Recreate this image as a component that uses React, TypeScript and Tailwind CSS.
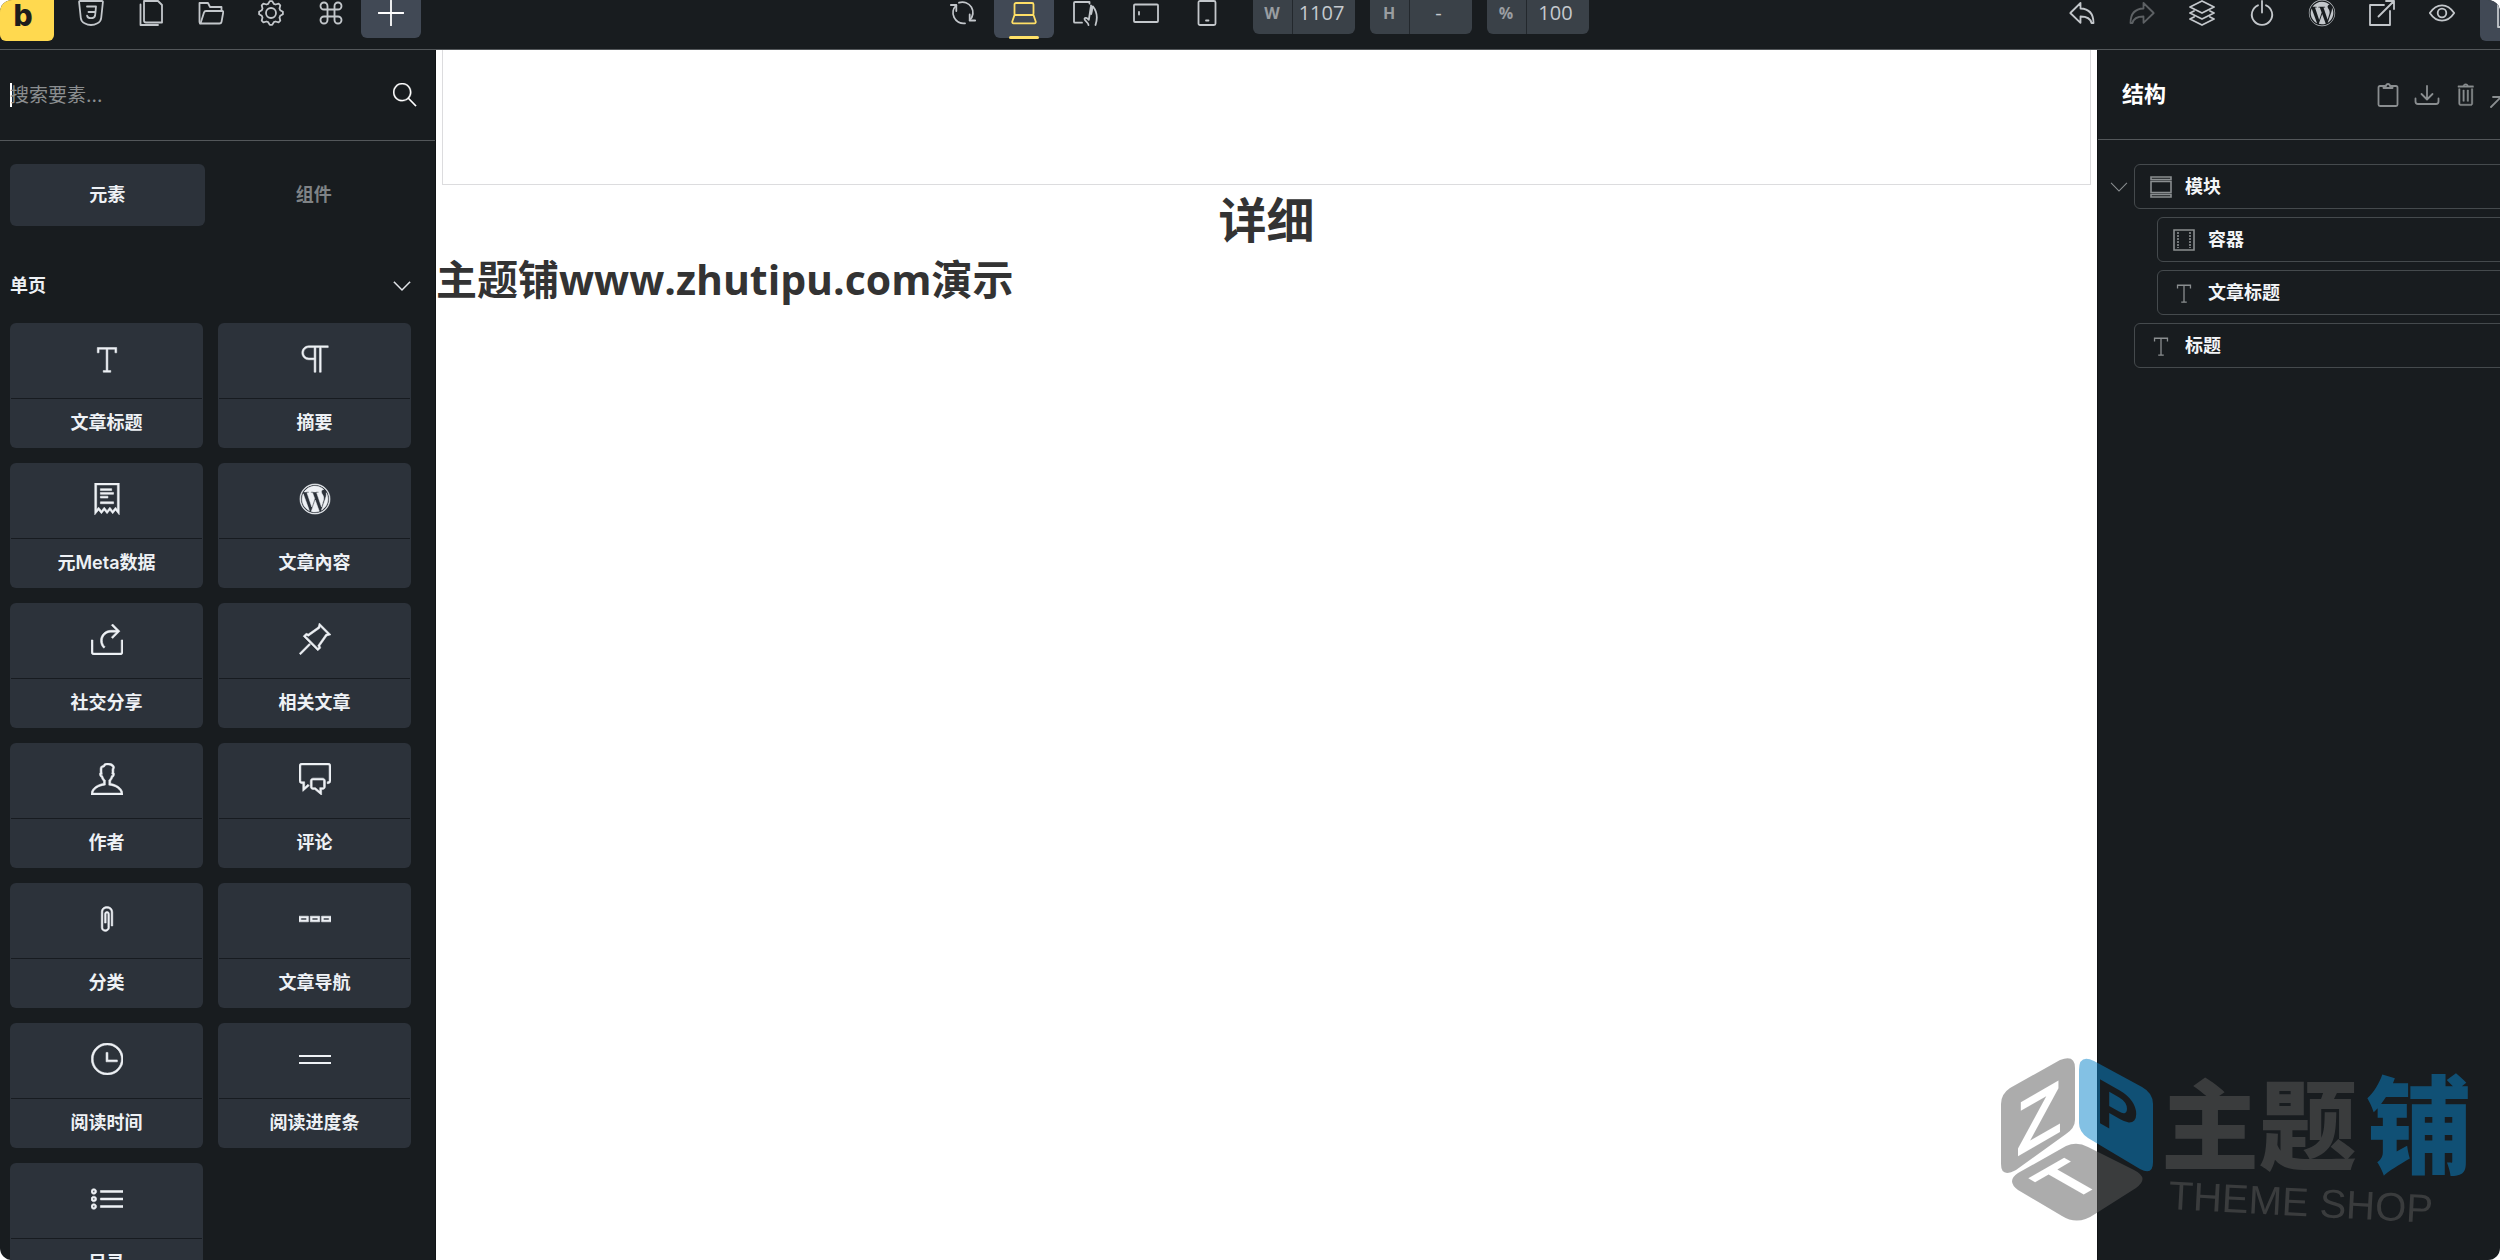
import type { ReactNode } from 'react';
import { Command } from 'lucide-react';
import {
  TfiAngleDown,
  TfiClip,
  TfiComments,
  TfiLayoutMenuSeparated,
  TfiList,
  TfiParagraph,
  TfiPinAlt,
  TfiReceipt,
  TfiSearch,
  TfiShare,
  TfiText,
  TfiTime,
  TfiTrash,
  TfiUser,
  TfiWordpress,
} from 'react-icons/tfi';

/* 26px outline icon used in both toolbars */
const Line = ({ children }: { children: ReactNode }) => (
  <svg
    className="h-[26px] w-[26px] shrink-0"
    viewBox="0 0 26 26"
    fill="none"
    stroke="currentColor"
    strokeWidth={1.8}
    strokeLinejoin="round"
    strokeLinecap="round"
  >
    {children}
  </svg>
);

/* Cog outline with eight rounded teeth */
const gearPath = Array.from({ length: 32 }, (_, i) => {
  const r = i % 4 < 2 ? 12 : 9.6;
  const a = ((i + 0.5) / 32) * Math.PI * 2 - Math.PI / 2 - Math.PI / 16;
  return `${i ? 'L' : 'M'}${(13 + r * Math.cos(a)).toFixed(1)} ${(13 + r * Math.sin(a)).toFixed(1)}`;
}).join('') + 'Z';

const leftTools = [
  {
    label: 'CSS',
    icon: (
      <Line>
        <path d="M2 1h22q1 0 .9 1l-1.7 16c-.3 2.7-1.5 4.2-3.7 5.2-4.3 2.4-8.7 2.4-13 0-2.2-1-3.4-2.5-3.7-5.2L1.1 2Q1 1 2 1z" />
        <path d="M9 6.5h9l-.5 5.5h-7M17.5 12l-.4 3.5c-.3 1.7-1.9 2.7-4.1 2.7s-3.5-.8-3.9-2.5" />
      </Line>
    ),
  },
  {
    label: '页面',
    icon: (
      <Line>
        <path d="M6 1h14l4 4v17.5H8q-2 0-2-2z" />
        <path d="M2.5 4.5V25H20" />
      </Line>
    ),
  },
  {
    label: '模板',
    icon: (
      <Line>
        <path d="M2 23.5L1.5 22V3H10l2 4h11.5v4" />
        <path d="M8 11h16q1.5 0 1.2 1.5L23.5 22q-.3 1.5-2 1.5h-19L6 12.5Q6.5 11 8 11z" />
      </Line>
    ),
  },
  {
    label: '设置',
    icon: (
      <Line>
        <path d={gearPath} />
        <circle cx="13" cy="13" r="5" />
      </Line>
    ),
  },
  { label: '命令', icon: <Command size={28} strokeWidth={1.6} /> },
];

const devices = [
  {
    label: '刷新',
    icon: (
      <Line>
        <path d="M6.3 5.3A10.5 10.5 0 0 0 15 23.3" />
        <path d="M9 2.7A10.5 10.5 0 0 1 19.7 20.2" />
        <path d="M.8 5h5.5v6M25.2 20.5h-5.5v-6" />
      </Line>
    ),
  },
  {
    label: '桌面',
    active: true,
    icon: (
      <Line>
        <rect x="3.5" y="3" width="19" height="12" rx="1.5" />
        <path d="M3.5 15h19l2.2 6.5q.3 1.8-1.2 1.8h-21q-1.5 0-1.2-1.8z" />
      </Line>
    ),
  },
  {
    label: '平板竖屏',
    icon: (
      <Line>
        <path d="M10 22.7H3q-1 0-1-1V3q0-1 1-1h14.5v1.5" />
        <path d="M16.5 25c0-2.5-3.8-4-4-6 .3-2 2.5-1.3 4.3.8l2-12.8M19 5.5c1.7 1 1.5 4 .2 8.5M21 6.5c3.5 4.5 5 11 2.5 18.5" />
      </Line>
    ),
  },
  {
    label: '手机横屏',
    icon: (
      <Line>
        <rect x="1" y="4.5" width="24" height="17.5" rx="1" />
        <path d="M6 12v2.5" />
      </Line>
    ),
  },
  {
    label: '手机竖屏',
    icon: (
      <Line>
        <rect x="4.5" y="1" width="17" height="24" rx="1.5" />
        <path d="M12 20.5h2.5" />
      </Line>
    ),
  },
];

const sizes = [
  { id: 'width', label: 'W', value: '1107' },
  { id: 'height', label: 'H', value: '-' },
  { id: 'scale', label: '%', value: '100' },
];

const rightTools = [
  {
    label: '撤销',
    icon: (
      <Line>
        <path d="M1.3 13L11.5 3v5.5c8 .3 13 4.5 13 14.5h-2c-1-4.5-4-6.5-11-6.5v6.3z" />
      </Line>
    ),
  },
  {
    label: '重做',
    muted: true,
    icon: (
      <Line>
        <path d="M24.7 13L14.5 3v5.5c-8 .3-13 4.5-13 14.5h2c1-4.5 4-6.5 11-6.5v6.3z" />
      </Line>
    ),
  },
  {
    label: '图层',
    icon: (
      <Line>
        <path d="M13 1l12 6-12 6L1 7z" />
        <path d="M5 11l-4 2 12 6 12-6-4-2M5 17l-4 2 12 6 12-6-4-2" />
      </Line>
    ),
  },
  {
    label: '状态',
    icon: (
      <Line>
        <path d="M9 5.3a10.2 10.2 0 1 0 8 0M13 1v11.5" />
      </Line>
    ),
  },
  { label: 'WordPress', icon: <TfiWordpress size={28} /> },
  {
    label: '打开',
    icon: (
      <Line>
        <path d="M15 5H1v20h20V11M9.5 16.5L25 1M17 1h8v8" />
      </Line>
    ),
  },
  {
    label: '预览',
    icon: (
      <Line>
        <path d="M.8 13c3.7-5.5 8-7.7 12.2-7.7s8.5 2.2 12.2 7.7c-3.7 5.5-8 7.7-12.2 7.7S4.5 18.5.8 13z" />
        <circle cx="13" cy="13" r="4.3" />
      </Line>
    ),
  },
];

const ProgressIcon = () => (
  <svg className="h-8 w-8" viewBox="0 0 32 32" fill="none" stroke="currentColor" strokeWidth={2}>
    <path d="M0 13h32M0 20h32" />
  </svg>
);

const elements = [
  { name: '文章标题', icon: <TfiText size={30} /> },
  { name: '摘要', icon: <TfiParagraph size={30} /> },
  { name: '元Meta数据', icon: <TfiReceipt size={32} /> },
  { name: '文章內容', icon: <TfiWordpress size={32} /> },
  { name: '社交分享', icon: <TfiShare size={32} /> },
  { name: '相关文章', icon: <TfiPinAlt size={32} /> },
  { name: '作者', icon: <TfiUser size={32} /> },
  { name: '评论', icon: <TfiComments size={32} /> },
  { name: '分类', icon: <TfiClip size={28} /> },
  { name: '文章导航', icon: <TfiLayoutMenuSeparated size={32} /> },
  { name: '阅读时间', icon: <TfiTime size={32} /> },
  { name: '阅读进度条', icon: <ProgressIcon /> },
  { name: '目录', icon: <TfiList size={32} /> },
];

const SectionIcon = () => (
  <svg className="h-[22px] w-[22px]" viewBox="0 0 22 22" fill="none" stroke="currentColor" strokeWidth={1.6}>
    <path d="M1 1h20v2.5H1zM1 18.5h20V21H1zM1 5.5h20v11H1z" />
  </svg>
);

const ContainerIcon = () => (
  <svg className="h-[22px] w-[22px]" viewBox="0 0 22 22" fill="none" stroke="currentColor" strokeWidth={1.6}>
    <path d="M1 1h20v20H1z" />
    <path d="M5 3v16M17 3v16" strokeDasharray="2 1" />
  </svg>
);

const tree = [
  { name: '模块', icon: <SectionIcon />, open: true },
  { name: '容器', icon: <ContainerIcon />, nested: true },
  { name: '文章标题', icon: <TfiText size={22} />, nested: true },
  { name: '标题', icon: <TfiText size={22} /> },
];

const Toolbar = () => (
  <header className="flex h-[50px] shrink-0 items-start justify-between overflow-hidden border-b border-[#53575a] text-[#c3c7cb]">
    <div className="mr-12 flex shrink-0 items-start">
      <button
        aria-label="Bricks"
        className="mr-[7px] flex h-[41px] w-[54px] items-center justify-center rounded-b-md bg-[#ffd94f] pr-2 pb-3 font-['Inter',sans-serif] text-3xl leading-7 font-extrabold text-[#1d1d1d]"
      >
        b
      </button>
      {leftTools.map((tool) => (
        <button key={tool.label} aria-label={tool.label} className="flex h-[38px] w-[60px] items-center justify-center pb-3">
          {tool.icon}
        </button>
      ))}
      <button aria-label="添加" className="flex h-[38px] w-[60px] items-center justify-center rounded-b-md bg-[#414955] pb-3 text-white">
        <Line>
          <path d="M13 .5v25M.5 13h25" />
        </Line>
      </button>
    </div>

    <div className="flex shrink-0 items-start gap-4">
      <div className="flex gap-px">
        {devices.map((device) => (
          <button
            key={device.label}
            aria-label={device.label}
            className={
              device.active
                ? 'relative flex h-[38px] w-[60px] items-center justify-center rounded-b-md bg-[#414955] pb-3 text-[#ffdf66]'
                : 'flex h-[38px] w-[60px] items-center justify-center pb-3'
            }
          >
            {device.icon}
            {device.active && <span className="absolute -bottom-px left-[15px] h-[3px] w-[30px] rounded-full bg-[#ffe168]" />}
          </button>
        ))}
      </div>
      <div className="flex gap-[15px] font-['Open_Sans',sans-serif]">
        {sizes.map((size) => (
          <div key={size.id} className="flex h-[34px] w-[102px] overflow-hidden rounded-b-md bg-[#3a4148]">
            <label htmlFor={size.id} className="flex w-10 items-center justify-center border-r border-[#23282d] pb-2 text-base font-bold text-[#999da1]">
              {size.label}
            </label>
            <input
              id={size.id}
              defaultValue={size.value}
              className="w-0 flex-1 bg-transparent pr-1 pb-2 text-center text-xl leading-6 font-medium text-[#c5c9ce] outline-none"
            />
          </div>
        ))}
      </div>
    </div>

    <div className="-mr-10 flex shrink-0 items-start">
      {rightTools.map((tool) => (
        <button
          key={tool.label}
          aria-label={tool.label}
          className={
            tool.muted
              ? 'flex h-[38px] w-[60px] items-center justify-center pb-3 text-[#5d6164]'
              : 'flex h-[38px] w-[60px] items-center justify-center pb-3'
          }
        >
          {tool.icon}
        </button>
      ))}
      <button aria-label="保存" className="ml-2 flex h-[41px] w-[60px] items-center justify-center rounded-b-md bg-[#414955] pb-3">
        <Line>
          <path d="M1 3h20v22H1z" />
        </Line>
      </button>
    </div>
  </header>
);

const ElementsPanel = () => (
  <aside className="flex w-[436px] shrink-0 flex-col overflow-hidden border-r border-[#101315]">
    <div className="flex h-[91px] shrink-0 items-center border-b border-[#53575a] pr-[18px] pl-2.5">
      <span className="-mr-0.5 h-6 w-0.5 bg-white" />
      <input
        aria-label="搜索要素"
        placeholder="搜索要素..."
        className="min-w-0 flex-1 bg-transparent pt-0.5 text-[19px] leading-7 outline-none placeholder:text-[#8b8e90]"
      />
      <button aria-label="搜索" className="text-white [&_svg]:stroke-[0.2]">
        <TfiSearch size={24} />
      </button>
    </div>

    <div className="flex shrink-0 gap-3 pt-[23px] pr-6 pl-2.5 text-lg font-bold">
      <button className="h-[62px] flex-1 rounded-md bg-[#2c323a] text-[#eef1f5]">元素</button>
      <button className="h-[62px] flex-1 text-[#7f8386]">组件</button>
    </div>

    <button className="flex shrink-0 items-center justify-between pt-[46px] pr-6 pl-2.5 text-lg leading-7 font-bold text-[#eef1f5] [&_svg]:stroke-[0.4]">
      单页
      <TfiAngleDown size={18} />
    </button>

    <div className="grid grid-cols-2 gap-[15px] pt-[23px] pr-6 pl-2.5">
      {elements.map((el) => (
        <button key={el.name} className="flex h-[125px] flex-col rounded-md bg-[#2c323a] px-px text-[#eef1f5]">
          <span className="flex h-[75px] w-full items-center justify-center pb-1 [&_svg]:stroke-[0.3] [&_svg[viewBox='0_0_32_32']]:stroke-2">
            {el.icon}
          </span>
          <span className="flex w-full flex-1 items-center justify-center border-t border-[#171b20] pb-0.5 text-lg font-semibold">{el.name}</span>
        </button>
      ))}
    </div>
  </aside>
);

const Canvas = () => (
  <main className="min-w-0 flex-1 bg-white font-['Open_Sans','Noto_Sans_CJK_SC',sans-serif] font-bold text-[#333333]">
    <div className="mx-1.5 h-[135px] border border-t-0 border-[#dcdcde]" />
    <h2 className="text-center text-5xl leading-[70px]">详细</h2>
    <h1 className="text-[41px] leading-12">主题铺www.zhutipu.com演示</h1>
  </main>
);

const StructurePanel = () => (
  <aside className="w-[403px] shrink-0 overflow-hidden border-l border-[#101315]">
    <div className="flex h-[90px] items-center justify-between border-b border-[#53575a] pl-6">
      <h2 className="pb-0.5 text-[22px] leading-8 font-bold text-white">结构</h2>
      <div className="-mr-4 flex gap-[13px] text-[#8a8e90]">
        <button aria-label="粘贴">
          <Line>
            <path d="M9 4H5Q3.500 4 3.500 5.500v17Q3.500 24 5 24h16q1.500 0 1.500-1.500v-17Q22.500 4 21 4h-4M8.500 6V4H11q.3-2 2-2t2 2h2.500v2z" />
          </Line>
        </button>
        <button aria-label="下载">
          <Line>
            <path d="M13 4v13M7.500 12l5.500 5.500 5.500-5.500M1.500 16.500v3Q1.500 22 4 22h18q2.500 0 2.500-2.500v-3" />
          </Line>
        </button>
        <button aria-label="删除" className="[&_svg]:stroke-[0.3]">
          <TfiTrash size={24} />
        </button>
        <button aria-label="展开">
          <Line>
            <path d="M1 25L11 15M3 15h8v8M25 1L15 11M23 11h-8V3" />
          </Line>
        </button>
      </div>
    </div>

    <ul className="-mr-2 flex flex-col gap-2 pt-6 pl-3">
      {tree.map((item) => (
        <li key={item.name} className={item.nested ? 'flex items-center pl-[47px]' : 'flex items-center'}>
          {!item.nested && (
            <span className="w-6 shrink-0 text-[#8a8e90]">{item.open && <TfiAngleDown size={18} />}</span>
          )}
          <button className="flex h-[45px] flex-1 items-center rounded-md border border-[#454a4d] pl-3.5 text-lg font-bold text-[#f3f5f7]">
            <span className="mr-3 flex w-6 items-center justify-center text-[#8a8e90]">{item.icon}</span>
            {item.name}
          </button>
        </li>
      ))}
    </ul>
  </aside>
);

/* Translucent brand mark over the lower right corner */
const BrandMark = () => (
  <svg
    className="pointer-events-none absolute right-[30px] bottom-[30px] h-[172px] w-[470px] overflow-visible opacity-50"
    viewBox="0 0 470 172"
    fill="#5c5c5c"
    fontFamily="'Liberation Sans', 'Noto Sans CJK SC', sans-serif"
  >
    <mask id="cube-letters">
      <rect width="470" height="172" fill="#fff" />
      <g fill="#000" textAnchor="middle" fontWeight="700">
        <text fontSize="76" transform="translate(39 86) skewY(-30)">Z</text>
        <text fontSize="64" transform="translate(117 75) skewY(30)">P</text>
        <text fontSize="70" transform="matrix(.87 -.5 .87 .5 88 134)">T</text>
      </g>
    </mask>
    <g mask="url(#cube-letters)">
      <path d="M1 46Q1 36 10 30L60 2Q75-4 75 10V62Q75 70 66 76L16 112Q1 120 1 106Z" />
      <path fill="#0a84ca" d="M79 12Q79-4 94 3L142 29Q153 35 153 46V104Q153 118 140 111L88 80Q79 74 79 65Z" />
      <path d="M18 115L66 88Q77 83 88 89L134 112Q150 120 136 130L95 156Q78 168 62 158L18 132Q6 123 18 115Z" />
    </g>
    <g fontWeight="900">
      <text x="161" y="104" fontSize="98">主题</text>
      <text x="366" y="107" fontSize="106" fill="#0a84ca">铺</text>
    </g>
    <text fontSize="40" transform="translate(168 151) rotate(3)">THEME SHOP</text>
  </svg>
);

export default function App() {
  return (
    <div className="h-screen bg-white">
      <div className="relative flex h-full flex-col overflow-hidden rounded-xl bg-[#181c1f] font-['Inter','Noto_Sans_CJK_SC',sans-serif]">
        <Toolbar />
        <div className="flex min-h-0 flex-1">
          <ElementsPanel />
          <Canvas />
          <StructurePanel />
        </div>
        <BrandMark />
      </div>
    </div>
  );
}
